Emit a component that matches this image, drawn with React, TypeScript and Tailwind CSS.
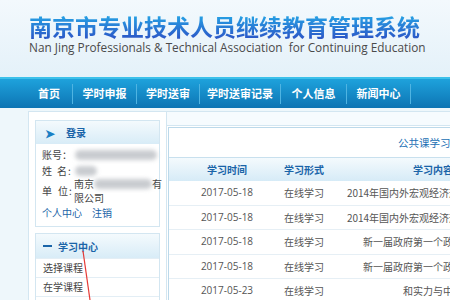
const navItems = [
  { label: "首页", w: "w-[46px]" },
  { label: "学时申报", w: "w-[63px]" },
  { label: "学时送审", w: "w-[62px]" },
  { label: "学时送审记录", w: "w-[80px]" },
  { label: "个人信息", w: "w-[65px]" },
  { label: "新闻中心", w: "w-[63px]" },
];

const rows = [
  { date: "2017-05-18", form: "在线学习", content: "2014年国内外宏观经济形势与政策分析" },
  { date: "2017-05-18", form: "在线学习", content: "2014年国内外宏观经济形势与政策分析" },
  { date: "2017-05-18", form: "在线学习", content: "新一届政府第一个政府工作报告" },
  { date: "2017-05-18", form: "在线学习", content: "新一届政府第一个政府工作报告" },
  { date: "2017-05-23", form: "在线学习", content: "和实力与中国" },
];

const cjk = { fontFamily: '"Noto Sans CJK SC", "Noto Sans", sans-serif' };

function Blur({ w }: { w: number }) {
  return (
    <span
      className="inline-block h-[10px] shrink-0 rounded-full bg-[#c9ccd0] blur-[2px] align-middle"
      style={{ width: w }}
    />
  );
}

// cells centered on a column, text may overflow both sides
function Cell({ w, children, className = "" }: { w: string; children: React.ReactNode; className?: string }) {
  return <div className={`flex shrink-0 justify-center whitespace-nowrap ${w} ${className}`}>{children}</div>;
}

function Label({ a, b, gap, w }: { a: string; b: string; gap: string; w: string }) {
  return (
    <span className={`flex shrink-0 ${w}`}>
      {a}
      <span className={gap}>{b}</span>
      <span className="ml-[1px]">:</span>
    </span>
  );
}

export default function App() {
  return (
    <div className="relative h-[300px] w-[450px] overflow-hidden bg-[#eef7fb]" style={cjk}>
      {/* header */}
      <div className="h-[77px] bg-[linear-gradient(#f3f9fd,#e4f1f9)] pl-[29px] pt-[11px]">
        <div className="whitespace-nowrap bg-[linear-gradient(#24b0ea,#2c4fc4)] bg-clip-text text-[23px] font-bold leading-[30px] text-transparent">
          南京市专业技术人员继续教育管理系统
        </div>
        <div
          className="-mt-[1px] whitespace-pre text-[11.8px] leading-[14px] text-[#4a4a4a]"
          style={{ fontFamily: '"Open Sans", sans-serif' }}
        >
          Nan Jing Professionals &amp; Technical Association  for Continuing Education
        </div>
      </div>

      {/* nav */}
      <div className="h-[2px] bg-[#3cc0ea]" />
      <div className="flex h-[29px] items-center bg-[linear-gradient(#1ea2dc,#0d74b3)] pl-[26px] text-[11px] font-bold text-white">
        {navItems.map((n) => (
          <div key={n.label} className="flex items-center">
            <span className={`whitespace-nowrap text-center ${n.w}`}>{n.label}</span>
            <span className="h-[20px] w-px bg-[#4fb4e2]" />
          </div>
        ))}
      </div>

      {/* body */}
      <div className="ml-[28px] mt-[3px] flex border-l border-t border-[#d3e6f1] bg-white">
        {/* sidebar */}
        <div className="w-[137px] shrink-0 px-[6px] pt-[8px]">
          <div className="border border-[#d3e6f1]">
            <div className="flex h-[23px] items-center bg-[linear-gradient(#f4fafd,#d8ecf7)] pl-[9px] text-[10px] font-bold text-[#1a64a8]">
              <span className="text-[12px] leading-none text-[#1a7fc4]">➤</span>
              <span className="ml-[11px]">登录</span>
            </div>
            <div className="whitespace-nowrap px-[6px] pb-[5px] pt-[3px] text-[10px] leading-[16px] text-[#444]">
              <div className="flex items-center">
                <span className="w-[33px] shrink-0">账号：</span>
                <Blur w={82} />
              </div>
              <div className="flex items-center">
                <Label a="姓" b="名" gap="ml-[5px]" w="w-[33px]" />
                <Blur w={22} />
              </div>
              <div className="-mt-[2px] flex items-center">
                <Label a="单" b="位" gap="ml-[6px]" w="w-[32px]" />
                <div className="leading-[14px]">
                  <div className="flex items-center">
                    南京
                    <Blur w={58} />
                    有
                  </div>
                  <div>限公司</div>
                </div>
              </div>
              <div className="text-[#1a64a8]">
                个人中心<span className="ml-[10px]">注销</span>
              </div>
            </div>
          </div>

          <div className="mt-[6px] border border-[#d3e6f1]">
            <div className="flex h-[24px] items-center bg-[linear-gradient(#f4fafd,#d8ecf7)] pl-[7px] text-[10px] font-bold text-[#1a64a8]">
              <span className="h-[2px] w-[9px] bg-[#1a64a8]" />
              <span className="ml-[6px]">学习中心</span>
            </div>
            <div className="border-t border-[#e3eef5] pl-[7px] text-[10px] leading-[18px] text-[#444]">选择课程</div>
            <div className="border-t border-[#e3eef5] pl-[7px] text-[10px] leading-[18px] text-[#444]">在学课程</div>
            <div className="h-[20px] border-t border-[#e3eef5]" />
          </div>
        </div>

        {/* main */}
        <div className="w-[400px] shrink-0 border-l border-[#d3e6f1]">
          <div className="h-[14px] border-b border-[#d3e6f1] bg-[#f6fbfe]" />
          <div className="ml-[1px] mt-[1px] border-l border-t border-[#bcd9ea]">
            <div className="flex h-[29px] items-center whitespace-nowrap pl-[229px] text-[10.5px] text-[#1a6fb4]">
              公共课学习情况
            </div>
            <div className="flex h-[24px] items-center border-t border-[#c8e0ee] bg-[linear-gradient(#f4fafd,#d6ebf7)] text-[10px] font-bold text-[#1a64a8]">
              <Cell w="w-[116px]">学习时间</Cell>
              <Cell w="w-[38px]">学习形式</Cell>
              <Cell w="w-[220px]">学习内容</Cell>
            </div>
            {rows.map((r, i) => (
              <div key={i} className="flex h-[24.5px] items-center border-b border-[#e6eff5] text-[10px] text-[#555]">
                <Cell w="w-[116px]" className="font-['Open_Sans']">
                  {r.date}
                </Cell>
                <Cell w="w-[38px]">{r.form}</Cell>
                <Cell w="w-[220px]">{r.content}</Cell>
              </div>
            ))}
          </div>
        </div>
      </div>

      {/* red annotation line */}
      <svg className="absolute left-0 top-0" width="450" height="300">
        <line x1="83" y1="251" x2="90" y2="300" stroke="#e53935" strokeWidth="1.2" />
      </svg>
    </div>
  );
}
